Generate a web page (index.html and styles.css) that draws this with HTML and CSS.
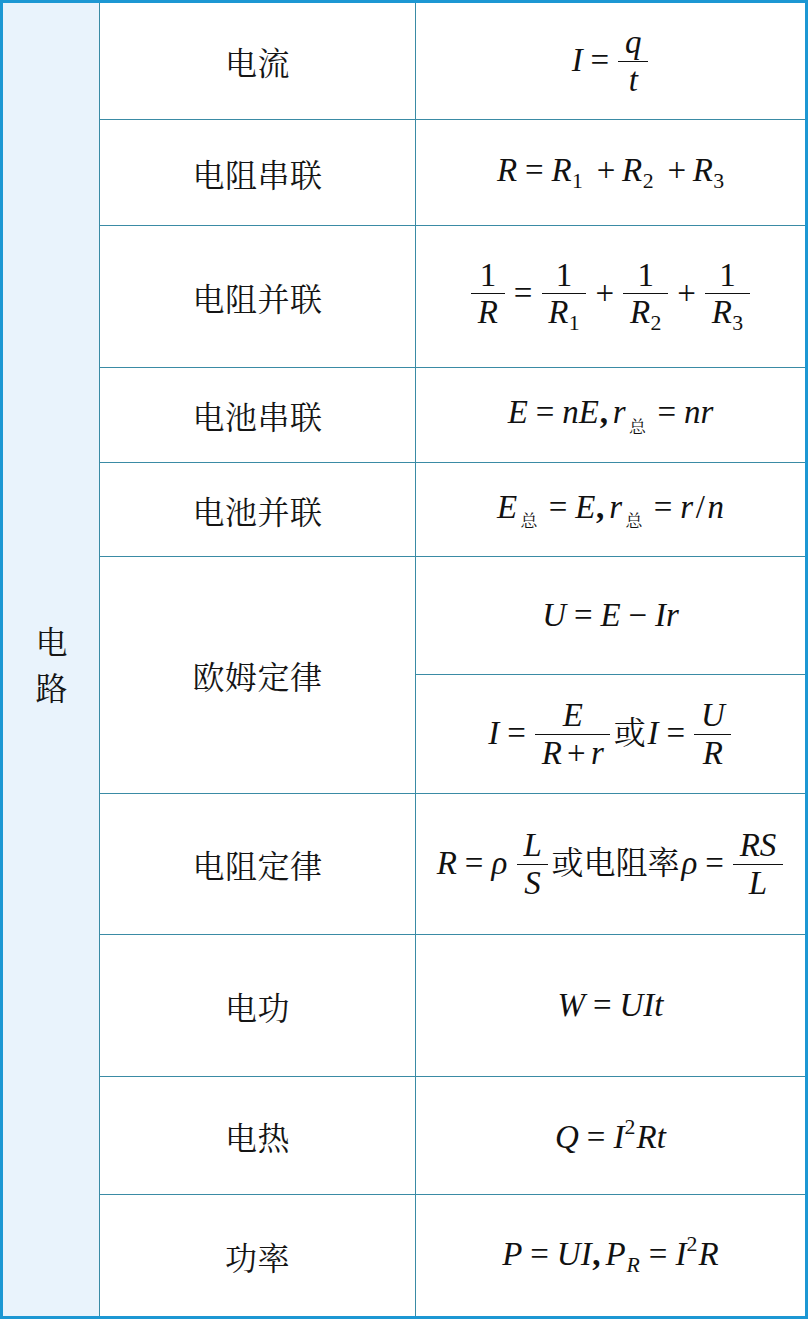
FILE: index.html
```html
<!DOCTYPE html>
<html lang="zh">
<head>
<meta charset="utf-8">
<title>电路公式</title>
<link rel="stylesheet" href="styles.css">
</head>
<body>
<div class="table">
  <div class="cat"><span>电</span><span>路</span></div>

  <div class="name">电流</div>
  <div class="f"><span class="m"><i>I</i><span class="op">=</span><span class="frac"><span class="num"><i>q</i></span><span class="den"><i>t</i></span></span></span></div>

  <div class="name">电阻串联</div>
  <div class="f"><span class="m"><i>R</i><span class="op">=</span><i>R</i><span class="sub">1</span><span class="op wide">+</span><i>R</i><span class="sub">2</span><span class="op wide">+</span><i>R</i><span class="sub">3</span></span></div>

  <div class="name">电阻并联</div>
  <div class="f"><span class="m"><span class="frac"><span class="num">1</span><span class="den"><i>R</i></span></span><span class="op">=</span><span class="frac"><span class="num">1</span><span class="den"><i>R</i><span class="sub">1</span></span></span><span class="op">+</span><span class="frac"><span class="num">1</span><span class="den"><i>R</i><span class="sub">2</span></span></span><span class="op">+</span><span class="frac"><span class="num">1</span><span class="den"><i>R</i><span class="sub">3</span></span></span></span></div>

  <div class="name">电池串联</div>
  <div class="f"><span class="m"><i>E</i><span class="op">=</span><i>nE</i><b class="comma">,</b><i>r</i><span class="zsub">总</span><span class="op">=</span><i>nr</i></span></div>

  <div class="name">电池并联</div>
  <div class="f"><span class="m"><i>E</i><span class="zsub">总</span><span class="op">=</span><i>E</i><b class="comma">,</b><i>r</i><span class="zsub">总</span><span class="op">=</span><i>r</i><span class="slash">/</span><i>n</i></span></div>

  <div class="name span2">欧姆定律</div>
  <div class="f"><span class="m"><i>U</i><span class="op">=</span><i>E</i><span class="op">−</span><i>Ir</i></span></div>
  <div class="f"><span class="m"><i>I</i><span class="op">=</span><span class="frac"><span class="num"><i>E</i></span><span class="den"><i>R</i><span class="op">+</span><i>r</i></span></span><span class="zh">或</span><i>I</i><span class="op">=</span><span class="frac"><span class="num"><i>U</i></span><span class="den"><i>R</i></span></span></span></div>

  <div class="name">电阻定律</div>
  <div class="f"><span class="m"><i>R</i><span class="op">=</span><i>ρ</i> <span class="frac"><span class="num"><i>L</i></span><span class="den"><i>S</i></span></span><span class="zh">或电阻率</span><i>ρ</i><span class="op">=</span><span class="frac"><span class="num"><i>RS</i></span><span class="den"><i>L</i></span></span></span></div>

  <div class="name">电功</div>
  <div class="f"><span class="m"><i>W</i><span class="op">=</span><i>UIt</i></span></div>

  <div class="name">电热</div>
  <div class="f"><span class="m"><i>Q</i><span class="op">=</span><i>I</i><span class="sup">2</span><i>Rt</i></span></div>

  <div class="name">功率</div>
  <div class="f"><span class="m"><i>P</i><span class="op">=</span><i>UI</i><b class="comma">,</b><i>P</i><i class="sub">R</i><span class="op">=</span><i>I</i><span class="sup">2</span><i>R</i></span></div>
</div>
</body>
</html>
```

FILE: styles.css
```css
html, body {
  margin: 0;
  padding: 0;
  background: #ffffff;
}

.table {
  box-sizing: border-box;
  width: 808px;
  height: 1319px;
  border: 3px solid #1c97d3;
  background: #3a8ba5;
  display: grid;
  grid-template-columns: 96px 315px 1fr;
  grid-template-rows: 116px 105px 141px 94px 93px 117px 118px 140px 141px 117px 121px;
  gap: 1px;
}

.cat {
  grid-column: 1;
  grid-row: 1 / span 11;
  background: #e9f3fc;
  display: flex;
  flex-direction: column;
  align-items: center;
  justify-content: center;
  font-family: "Noto Serif CJK SC", "Noto Sans CJK SC", serif;
  font-size: 32px;
  line-height: 46px;
  color: #151515;
  padding-top: 6px;
  padding-left: 1px;
}

.name {
  grid-column: 2;
  background: #ffffff;
  display: flex;
  align-items: center;
  justify-content: center;
  font-family: "Noto Serif CJK SC", "Noto Sans CJK SC", serif;
  font-size: 32px;
  color: #151515;
  letter-spacing: 0.5px;
}

.name.span2 {
  grid-row: span 2;
}

.f {
  grid-column: 3;
  background: #ffffff;
  display: flex;
  align-items: center;
  justify-content: center;
  font-family: "Liberation Serif", "Tinos", "Times New Roman", serif;
  font-size: 33px;
  color: #111111;
  white-space: nowrap;
}

.m {
  display: inline-block;
  line-height: 1.1;
}

.m i {
  font-style: italic;
}

.op {
  font-style: normal;
  margin: 0 0.24em;
}

.op.wide {
  margin: 0 0.2em 0 0.42em;
}

.sub {
  font-size: 0.66em;
  vertical-align: -0.32em;
  margin-left: 0.02em;
}

i.sub {
  font-style: italic;
  margin-left: 0.04em;
  margin-right: 0.05em;
}

.sup {
  font-size: 0.66em;
  vertical-align: 0.62em;
  margin-right: 0.06em;
}

.slash {
  margin: 0 0.08em;
}

.zsub {
  font-family: "Noto Serif CJK SC", "Noto Sans CJK SC", serif;
  font-size: 17px;
  vertical-align: -0.55em;
  margin: 0 0.2em 0 0.2em;
}

.comma {
  font-weight: bold;
  font-style: normal;
  margin: 0 0.15em 0 0.02em;
}

.zh {
  font-family: "Noto Serif CJK SC", "Noto Sans CJK SC", serif;
  font-size: 32px;
  font-style: normal;
  margin: 0 0.06em;
}

.frac {
  display: inline-flex;
  flex-direction: column;
  align-items: stretch;
  vertical-align: 0.54em;
  margin: 0 0.04em;
}

.frac > span {
  display: block;
  text-align: center;
  line-height: 1.1;
  padding: 0 0.2em;
}

.frac .den {
  border-top: 1.5px solid #111111;
}

.frac .den .op {
  margin: 0 0.16em;
}
```
